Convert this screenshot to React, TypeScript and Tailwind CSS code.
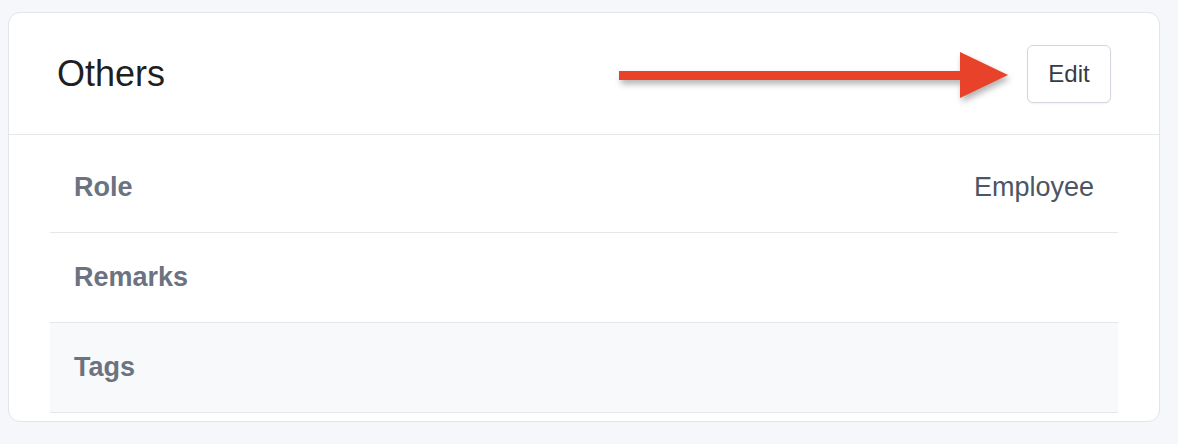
export default function App() {
  const rows = [
    { label: "Role", value: "Employee", shaded: false },
    { label: "Remarks", value: "", shaded: false },
    { label: "Tags", value: "", shaded: true },
  ];

  return (
    <main
      className="relative min-h-screen bg-[#f6f7fb] pl-2 pt-3"
      style={{ fontFamily: '"Liberation Sans", Arial, sans-serif' }}
    >
      {/* Card */}
      <section className="w-[1152px] overflow-hidden rounded-xl border-[1.5px] border-[#e3e5ea] bg-white">
        {/* Header */}
        <div className="flex h-[122px] items-center justify-between border-b border-[#e5e7eb] px-12">
          <h2 className="text-[36px] font-normal text-[#1f1f22]">Others</h2>
          <button className="h-[58px] w-[84px] rounded-md border-[1.5px] border-[#d4d7dd] bg-white text-[24px] text-[#353c48] shadow-[0_1px_2px_rgba(0,0,0,0.06)]">
            Edit
          </button>
        </div>

        {/* Details list */}
        <div className="px-[41px] pb-2 pt-2">
          {rows.map((row) => (
            <div
              key={row.label}
              className={`flex h-[90px] items-center justify-between border-b-[1.5px] border-[#e5e7eb] px-6 ${
                row.shaded ? "bg-[#f8f9fb]" : "bg-white"
              }`}
            >
              <span className="text-[27px] font-bold text-[#6b7280]">
                {row.label}
              </span>
              <span className="text-[27px] text-[#4b5563]">{row.value}</span>
            </div>
          ))}
        </div>
      </section>

      {/* Annotation arrow */}
      <svg
        className="pointer-events-none absolute left-[610px] top-[45px] h-[65px] w-[405px] drop-shadow-[2px_4px_3px_rgba(0,0,0,0.3)]"
        viewBox="0 0 405 65"
      >
        <rect x="9" y="26" width="345" height="9" fill="#e8432a" />
        <polygon points="350,7 398,30 350,53" fill="#e8432a" />
      </svg>
    </main>
  );
}
